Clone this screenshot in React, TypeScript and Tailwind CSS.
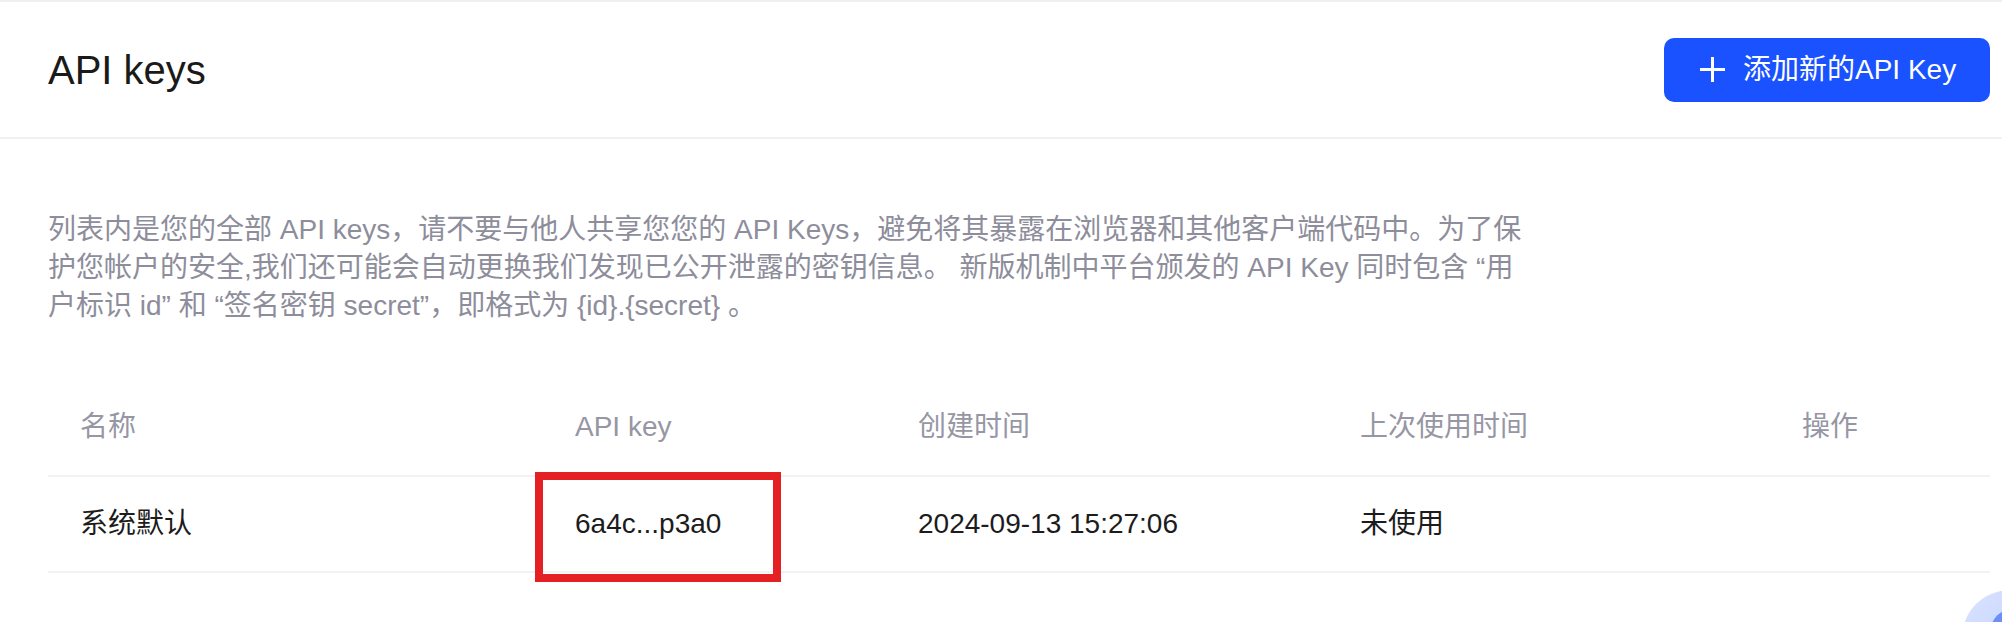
import React from "react";

const columns = ["名称", "API key", "创建时间", "上次使用时间", "操作"];

const rows = [
  {
    name: "系统默认",
    key: "6a4c...p3a0",
    createdAt: "2024-09-13 15:27:06",
    lastUsed: "未使用",
  },
];

function PlusIcon() {
  return (
    <svg width="25" height="25" viewBox="0 0 25 25" aria-hidden="true">
      <path d="M12.5 0v25M0 12.5h25" stroke="currentColor" strokeWidth="3" fill="none" />
    </svg>
  );
}

export default function App() {
  return (
    <div
      className="relative h-[622px] w-full overflow-hidden bg-white"
      style={{ fontFamily: '"Liberation Sans", "Noto Sans CJK SC", sans-serif' }}
    >
      <div className="h-[2px] bg-[#eeeef3]" />

      <header className="flex h-[137px] items-center justify-between border-b-2 border-[#f0f0f3] pl-12 pr-3">
        <h1 className="text-[40px] leading-none text-[#1a1a1a]">API keys</h1>
        <button
          type="button"
          className="flex h-16 w-[326px] items-center gap-[18px] rounded-[10px] bg-[#1a52ff] pl-9 text-[28px] leading-none text-white"
        >
          <PlusIcon />
          <span>添加新的API Key</span>
        </button>
      </header>

      <section className="pl-12 pt-[72px]">
        <p className="w-[1490px] text-[28px] leading-[38px] text-[#8d8d9b]">
          列表内是您的全部 API keys，请不要与他人共享您您的 API Keys，避免将其暴露在浏览器和其他客户端代码中。为了保护您帐户的安全,我们还可能会自动更换我们发现已公开泄露的密钥信息。 新版机制中平台颁发的 API Key 同时包含 “用户标识 id” 和 “签名密钥 secret”，即格式为 {"{id}.{secret}"} 。
        </p>
      </section>

      <div className="ml-12 mr-3 mt-[54px] text-[28px] leading-none">
        <div className="grid h-[98px] grid-cols-[495px_343px_442px_442px_1fr] items-center border-b-2 border-[#f2f2f4] text-[#9696a4]">
          {columns.map((col) => (
            <div key={col} className="pl-8">
              {col}
            </div>
          ))}
        </div>
        {rows.map((row) => (
          <div
            key={row.key}
            className="grid h-[96px] grid-cols-[495px_343px_442px_442px_1fr] items-center border-b-2 border-[#f2f2f4] text-[#1c1c1c]"
          >
            <div className="pl-8">{row.name}</div>
            <div className="pl-8">{row.key}</div>
            <div className="pl-8">{row.createdAt}</div>
            <div className="pl-8">{row.lastUsed}</div>
            <div className="pl-8" />
          </div>
        ))}
      </div>

      {/* annotation box around the key */}
      <div className="pointer-events-none absolute left-[535px] top-[472px] h-[110px] w-[246px] border-[8px] border-[#e42024]" />

      {/* floating help bubble, cut off at the corner */}
      <div className="absolute left-[1962px] top-[590px] h-24 w-24 rounded-full bg-gradient-to-br from-[#dbe4ff] to-[#b7c9ff]" />
      <div className="absolute left-[1990px] top-[608px] h-[50px] w-[50px] rounded-full bg-[#6c8ef8]" />
    </div>
  );
}
